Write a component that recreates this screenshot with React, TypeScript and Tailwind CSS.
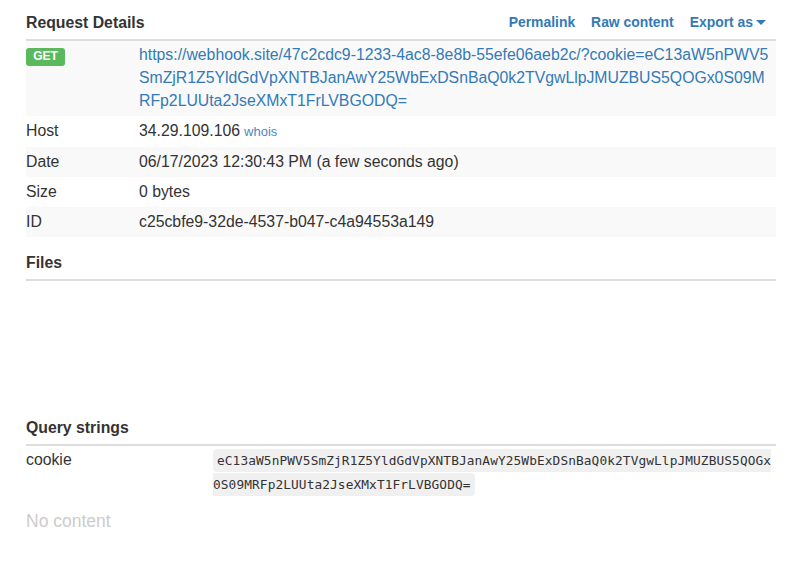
import React from 'react';

const url =
  'https://webhook.site/47c2cdc9-1233-4ac8-8e8b-55efe06aeb2c/?cookie=eC13aW5nPWV5SmZjR1Z5YldGdVpXNTBJanAwY25WbExDSnBaQ0k2TVgwLlpJMUZBUS5QOGx0S09MRFp2LUUta2JseXMxT1FrLVBGODQ=';

const cookie =
  'eC13aW5nPWV5SmZjR1Z5YldGdVpXNTBJanAwY25WbExDSnBaQ0k2TVgwLlpJMUZBUS5QOGx0S09MRFp2LUUta2JseXMxT1FrLVBGODQ=';

const rows = [
  { label: 'Host', value: '34.29.109.106', whois: true },
  { label: 'Date', value: '06/17/2023 12:30:43 PM (a few seconds ago)' },
  { label: 'Size', value: '0 bytes' },
  { label: 'ID', value: 'c25cbfe9-32de-4537-b047-c4a94553a149' },
];

const SectionHeading = ({ title, children, className = '' }: { title: string; children?: React.ReactNode; className?: string }) => (
  <div className={`flex items-center justify-between pt-[11px] pb-[5px] border-b-2 border-[#dddddd] ${className}`}>
    <span className="text-[15.8px] leading-[23px] font-bold text-[#333333]">{title}</span>
    {children}
  </div>
);

const App = () => {
  return (
    <div className="w-[803px] h-[562px] bg-white pl-[26px] text-[#333333] font-['Liberation_Sans',Arial,sans-serif]">
      <div className="w-[750px]">
        <SectionHeading title="Request Details">
          <div className="flex items-center gap-[16px] pr-[10px] text-[13.9px] font-bold text-[#337ab7]">
            <span>Permalink</span>
            <span>Raw content</span>
            <span className="flex items-center">
              Export as
              <span className="ml-[3px] mt-[1px] w-0 h-0 border-l-[5px] border-r-[5px] border-t-[5px] border-l-transparent border-r-transparent border-t-[#337ab7]" />
            </span>
          </div>
        </SectionHeading>

        <div className="flex bg-[#f9f9f9] py-[3.25px] text-[15.8px] leading-[22.86px]">
          <div className="w-[113px] shrink-0">
            <span className="mt-[3.75px] inline-block rounded-[3px] bg-[#5cb85c] px-[7.2px] pt-[2.4px] pb-[3.6px] text-[12px] leading-none font-bold text-white">
              GET
            </span>
          </div>
          <div className="flex-1 break-all text-[#337ab7]">{url}</div>
        </div>

        {rows.map((row, i) => (
          <div
            key={row.label}
            className={`flex py-[3.57px] text-[15.8px] leading-[22.86px] ${i % 2 === 1 ? 'bg-[#f9f9f9]' : ''}`}
          >
            <div className="w-[113px] shrink-0">{row.label}</div>
            <div className="flex-1">
              {row.value}
              {row.whois && <span className="ml-[4px] text-[13px] text-[#4f86c0]">whois</span>}
            </div>
          </div>
        ))}

        <SectionHeading title="Files" className="mt-[2.5px]" />
        <div className="h-[124px]" />

        <SectionHeading title="Query strings" />
        <div className="flex py-[3.5px] text-[15.8px] leading-[22.86px]">
          <div className="w-[187px] shrink-0">cookie</div>
          <div className="flex-1 break-all">
            <code className="rounded-[4px] bg-[#f0f0f0] px-[4px] py-[4px] text-[12.8px] tracking-[0.1px] text-[#333333] font-['DejaVu_Sans_Mono',monospace]">
              {cookie}
            </code>
          </div>
        </div>

        <div className="mt-[9px] text-[17.5px] leading-[25px] text-[#cccccc]">No content</div>
      </div>
    </div>
  );
};

export default App;
